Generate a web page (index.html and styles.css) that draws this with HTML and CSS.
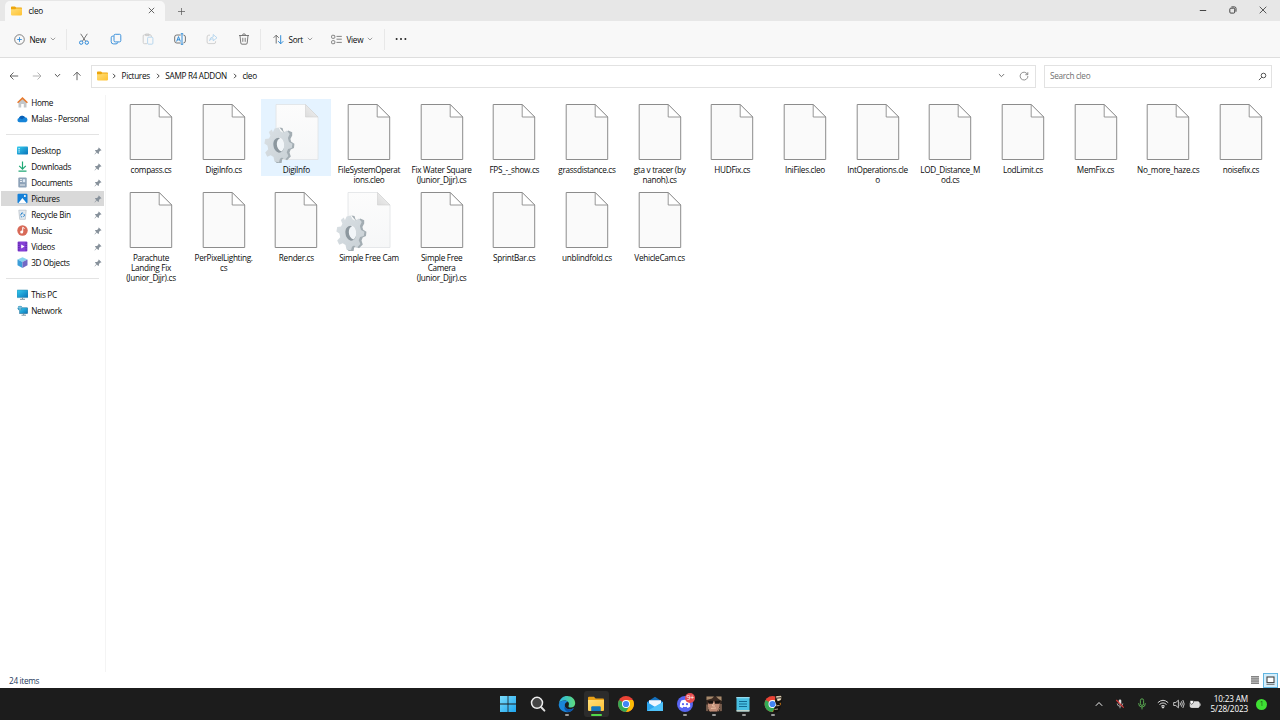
FILE: index.html
```html
<!DOCTYPE html>
<html lang="en">
<head>
  <meta charset="UTF-8">
  <meta name="viewport" content="width=device-width, initial-scale=1.0">
  <title>cleo</title>
  <link rel="stylesheet" href="styles.css">
</head>
<body>

  <!-- shared icons -->
  <svg class="sprite" width="0" height="0">
    <defs>
      <linearGradient id="gFolder" x1="0" y1="0" x2="1" y2="1"><stop offset="0" stop-color="#ffdf7a"/><stop offset="1" stop-color="#ffc233"/></linearGradient>
      <linearGradient id="gPage" x1="0" y1="0" x2="0" y2="1"><stop offset="0" stop-color="#fcfcfc"/><stop offset="1" stop-color="#f6f7f8"/></linearGradient>
      <linearGradient id="gFold" x1="0" y1="1" x2="1" y2="0"><stop offset="0" stop-color="#dcdcdc"/><stop offset="1" stop-color="#f4f4f4"/></linearGradient>
      <linearGradient id="gGear" x1="0" y1="0" x2="1" y2="1"><stop offset="0" stop-color="#dbe1e5"/><stop offset="1" stop-color="#c8d0d5"/></linearGradient>
      <linearGradient id="gScreen" x1="0" y1="0" x2="1" y2="1"><stop offset="0" stop-color="#35cdf0"/><stop offset="1" stop-color="#0a72b8"/></linearGradient>
      <linearGradient id="gEdge" x1="0" y1="0" x2="1" y2="0"><stop offset="0" stop-color="#28b5ea"/><stop offset="1" stop-color="#5fdc7c"/></linearGradient>
      <linearGradient id="gWin" x1="0" y1="0" x2="1" y2="1"><stop offset="0" stop-color="#7bdcfb"/><stop offset="1" stop-color="#1da5ee"/></linearGradient>
    </defs>
    <symbol id="folder" viewBox="0 0 11 10">
      <path d="M0 1.2Q0 .4.8.4H4L5.2 1.5H10.2Q11 1.5 11 2.3V5H0Z" fill="#eda60c"/>
      <path d="M0 3.2H4.2L5.2 2.4H11V8.6Q11 9.4 10.2 9.4H.8Q0 9.4 0 8.6Z" fill="url(#gFolder)"/>
    </symbol>
    <symbol id="file" viewBox="0 0 44 58">
      <path d="M1.2 1.5H30.2L42.7 14V56.5H1.2Z" fill="#fafafa" stroke="#8c8c8c"/>
      <path d="M30.2 1.5V14H42.7Z" fill="#fff" stroke="#8c8c8c" stroke-width=".9"/>
    </symbol>
    <symbol id="ini" viewBox="0 0 56 60">
      <path d="M13 1.5H42.5L55 14V56.5H13Z" fill="url(#gPage)" stroke="#dfe2e4" stroke-width=".8"/>
      <path d="M42.5 1.5V14H55Z" fill="url(#gFold)" stroke="#d0d0d0" stroke-width=".6"/>
      <g fill-rule="evenodd" transform="translate(1.2 0)">
        <path d="M15.2 24.5 18.3 25 19.3 28.6 21.4 29.6 24 27.6 28 29.2V32.4L26.2 36 27 38.8 30.2 40.8 29.8 45 26.5 46.6 25.3 49.4 26.6 53.4 22.8 57.3 19.8 55.5 18 56.3 17.4 60 12.5 60 10.8 58.2 13.5 50 24.5 40 19 29Z" fill="#a3adb3"/>
        <path d="M8.7 29.3 10.4 25.5 14.4 24.5 16.3 28.3 19.1 29.7 22.7 27.6 25.5 31 23.7 35 24.8 39 28.2 40.7 27.6 45 23.9 46.1 22.5 49.2 24.2 53 20.8 56.8 17.8 54.6 15.8 55.7 14.8 59.2 10.3 58.4 9.3 54 6.5 52.3 3 53.8 1 49.6 4 46.3 3.2 42.5.2 40.6 1 36 4.8 35.6 6.2 32.7 4.6 29 7.6 26.4ZM14.5 34.8C11 34.8 8.8 37.8 9.1 42S12.1 49.8 15.6 49.6 20.2 45.8 19.8 41.6 17.7 34.8 14.5 34.8Z" fill="url(#gGear)"/>
        <path d="M15.4 35.4C13.5 36.5 12.6 38.6 12.8 41.4S14.5 47.6 17.2 48.6C19.2 47.4 20.2 44.8 19.8 41.6S17.6 35.6 15.4 35.4Z" fill="#f1f5f8"/>
        <path d="M14.5 34.8C11 34.8 8.8 37.8 9.1 42S12.1 49.8 15.6 49.6L17.4 48.7C14.5 47.6 12.8 44.6 12.6 41.2 12.6 38.3 13.6 36.3 15.8 35.2Z" fill="#8c979e"/>
      </g>
    </symbol>
    <symbol id="pin" viewBox="0 0 8 8">
      <path d="M4.8.5 7.5 3.2 6.8 3.7 6.3 3.6 5 5 4.9 6.6 4.2 7 2.8 5.6.8 7.4.5 7.2 2.3 5.1 1 3.8 1.4 3.1 3 3 4.4 1.7 4.3 1Z" fill="#87919b"/>
    </symbol>
    <symbol id="down" viewBox="0 0 6 4"><path d="M.8.8 3 3 5.2.8" fill="none" stroke="currentColor" stroke-width=".8"/></symbol>
    <symbol id="right" viewBox="0 0 4 6"><path d="M1 .8 3.2 3 1 5.2" fill="none" stroke="currentColor" stroke-width=".9"/></symbol>
  </svg>

  <div class="window">
    <div class="titlebar">
      <div class="tab">
        <svg class="folder" width="11" height="10"><use href="#folder"/></svg>
        <span>cleo</span>
        <svg class="tab-close" width="7" height="7" viewBox="0 0 7 7"><path d="M.8.8 6.2 6.2M6.2.8.8 6.2" stroke="#444" stroke-width=".8"/></svg>
      </div>
      <svg class="tab-add" width="7" height="7" viewBox="0 0 7 7"><path d="M3.5 0V7M0 3.5H7" stroke="#555" stroke-width=".7"/></svg>
      <div class="controls">
        <svg width="8" height="8" viewBox="0 0 8 8"><path d="M.8 4.5H7.2" stroke="#333" stroke-width=".9"/></svg>
        <svg width="8" height="8" viewBox="0 0 8 8" fill="none" stroke="#333" stroke-width=".9"><rect x=".8" y="2.2" width="4.9" height="4.9" rx="1"/><path d="M2.4.9H5.4Q7 .9 7 2.5V5.7"/></svg>
        <svg width="8" height="8" viewBox="0 0 8 8"><path d="M.7.7 7.3 7.3M7.3.7.7 7.3" stroke="#333" stroke-width=".8"/></svg>
      </div>
    </div>

    <div class="toolbar">
      <div class="btn new">
        <svg width="11" height="11" viewBox="0 0 11 11"><circle cx="5.5" cy="5.5" r="4.8" fill="none" stroke="#666" stroke-width=".8"/><path d="M5.5 3.2V7.8M3.2 5.5H7.8" stroke="#2b88d8" stroke-width=".9"/></svg>
        <span>New</span><svg class="chev" width="6" height="4"><use href="#down"/></svg>
      </div>
      <div class="sep"></div>
      <div class="icon"><svg width="12" height="12" viewBox="0 0 12 12" fill="none"><path d="M2.7.8 7.7 8.4M9.3.8 4.3 8.4" stroke="#666" stroke-width=".9"/><circle cx="3.2" cy="9.6" r="1.7" stroke="#2b88d8"/><circle cx="8.8" cy="9.6" r="1.7" stroke="#2b88d8"/></svg></div>
      <div class="icon"><svg width="12" height="12" viewBox="0 0 12 12" fill="none"><path d="M3.6 3.1H2.8Q1.2 3.1 1.2 4.7V8.7Q1.2 10.9 3.4 10.9H6Q7.6 10.9 7.8 9.3" stroke="#2b88d8" stroke-width=".9"/><rect x="4" y="1.3" width="6.8" height="7.6" rx="1.3" stroke="#2b88d8" stroke-width=".9"/></svg></div>
      <div class="icon"><svg width="12" height="12" viewBox="0 0 12 12" fill="none"><path d="M5 10.7H2.5Q1.2 10.7 1.2 9.5V2.9Q1.2 1.8 2.5 1.8H8.1Q9.3 1.8 9.3 3V4M3.6 1H7V2.6H3.6Z" stroke="#c4c4c4" stroke-width=".8"/><rect x="5.6" y="4.2" width="5.3" height="7" rx="1" stroke="#a9cfec" stroke-width=".8"/></svg></div>
      <div class="icon"><svg width="12" height="12" viewBox="0 0 12 12" fill="none"><path d="M6.7 2H2.8Q.7 2 .7 4V8Q.7 10 2.8 10H6.7M9.4 2Q11.4 2.2 11.4 4V8Q11.4 9.8 9.4 10" stroke="#666" stroke-width=".9"/><path d="M8 1V11M6.8.7H9.2M6.8 11.3H9.2M2.6 8.5 4.5 3.6 6.4 8.5M3.2 6.8H5.8" stroke="#1f82d4" stroke-width=".9"/></svg></div>
      <div class="icon"><svg width="12" height="12" viewBox="0 0 12 12" fill="none"><path d="M4 2.2H2.7Q1.1 2.2 1.1 4V9Q1.1 10.6 2.7 10.6H8Q9.6 10.6 9.6 9V8.2" stroke="#c7c7c7" stroke-width=".8"/><path d="M3.5 7.6Q3.9 4 7.2 4V1.5L11 4.8 7.2 7.8V5.7Q5 5.6 3.5 7.6Z" stroke="#a9cfec" stroke-width=".8"/></svg></div>
      <div class="icon"><svg width="12" height="12" viewBox="0 0 12 12" fill="none" stroke="#5c5c5c" stroke-width=".8"><path d="M1 2.5H11M4.5 2.3Q4.5.8 6 .8T7.5 2.3M2 2.6 2.8 10Q2.9 11.2 4 11.2H8Q9.1 11.2 9.2 10L10 2.6M4.8 4.8V8.8M7.2 4.8V8.8"/></svg></div>
      <div class="sep"></div>
      <div class="btn sort">
        <svg width="11" height="11" viewBox="0 0 11 11" fill="none"><path d="M3.2 1.2V9.5M.6 3.8 3.2 1.2 5.8 3.8" stroke="#666" stroke-width=".9"/><path d="M7.7 1.2V9.7M5.2 7.2 7.7 9.8 10.3 7.2" stroke="#1f82d4" stroke-width=".9"/></svg>
        <span>Sort</span><svg class="chev" width="6" height="4"><use href="#down"/></svg>
      </div>
      <div class="btn view">
        <svg width="11" height="11" viewBox="0 0 11 11" fill="none" stroke="#666" stroke-width=".8"><rect x=".6" y="1.3" width="3.2" height="3" rx=".8"/><rect x=".6" y="6.7" width="3.2" height="3" rx=".8"/><path d="M5.5 2.4H10.8M5.5 5.2H10.8M5.5 8.4H10.8"/></svg>
        <span>View</span><svg class="chev" width="6" height="4"><use href="#down"/></svg>
      </div>
      <div class="sep"></div>
      <div class="icon"><svg width="12" height="4" viewBox="0 0 12 4" fill="#222"><circle cx="1.6" cy="2" r="1"/><circle cx="6" cy="2" r="1"/><circle cx="10.4" cy="2" r="1"/></svg></div>
    </div>

    <div class="navbar">
      <div class="nav">
        <svg width="10" height="10" viewBox="0 0 10 10" fill="none" stroke="#555" stroke-width=".9"><path d="M9.2 5H1M4.5 1.5 1 5 4.5 8.5"/></svg>
        <svg width="10" height="10" viewBox="0 0 10 10" fill="none" stroke="#aaa" stroke-width=".9"><path d="M.8 5H9M5.5 1.5 9 5 5.5 8.5"/></svg>
        <svg class="recent" width="7" height="5"><use href="#down"/></svg>
        <svg width="10" height="10" viewBox="0 0 10 10" fill="none" stroke="#555" stroke-width=".9"><path d="M5 9.2V1.2M1.5 4.7 5 1.2 8.5 4.7"/></svg>
      </div>
      <div class="address">
        <svg class="folder" width="11" height="10"><use href="#folder"/></svg>
        <svg class="crumb-sep" width="4" height="6"><use href="#right"/></svg>
        <span>Pictures</span>
        <svg class="crumb-sep" width="4" height="6"><use href="#right"/></svg>
        <span>SAMP R4 ADDON</span>
        <svg class="crumb-sep" width="4" height="6"><use href="#right"/></svg>
        <span>cleo</span>
        <svg class="history" width="7" height="5"><use href="#down"/></svg>
        <svg width="10" height="10" viewBox="0 0 10 10" fill="none" stroke="#777" stroke-width=".8"><path d="M8.6 3.6A3.9 3.9 0 1 0 8.9 5M8.8 1.2V3.7H6.3"/></svg>
      </div>
      <div class="search">
        <span>Search cleo</span>
        <svg width="9" height="9" viewBox="0 0 9 9" fill="none" stroke="#555"><circle cx="5.5" cy="3.5" r="2.3"/><path d="M3.8 5.2.9 8.1"/></svg>
      </div>
    </div>

    <div class="main">
      <div class="sidebar">
        <div class="row">
          <svg width="11" height="11" viewBox="0 0 11 11"><path d="M1.5 5 5.5 1.5 9.5 5V10.5H6.8V7H4.2V10.5H1.5Z" fill="#c3c7ca"/><path d="M.6 5.7 5.5 1.1 10.4 5.7" fill="none" stroke="#e8792c" stroke-width="1.5"/></svg>
          <span>Home</span>
        </div>
        <div class="row">
          <svg width="11" height="11" viewBox="0 0 11 11"><path d="M2.4 9.2A2.2 2.2 0 0 1 2 4.9 3.3 3.3 0 0 1 8 4.3 2.5 2.5 0 0 1 8.7 9.2Z" fill="#1684d8"/><path d="M2 4.9A3.3 3.3 0 0 1 8 4.3L5 6.2Z" fill="#0a5eb5"/></svg>
          <span>Malas - Personal</span>
        </div>
        <div class="divider"></div>
        <div class="row">
          <svg width="11" height="11" viewBox="0 0 11 11"><rect y="1.5" width="11" height="8" rx=".8" fill="url(#gScreen)"/><path d="M1.5 3.5H2.7M1.5 5.2H2.7M1.5 7H2.7" stroke="#dff8ff"/></svg>
          <span>Desktop</span><svg class="pin" width="8" height="8"><use href="#pin"/></svg>
        </div>
        <div class="row">
          <svg width="11" height="11" viewBox="0 0 11 11" fill="none" stroke="#20a876" stroke-width="1.2"><path d="M5.5.5V8M2.2 4.9 5.5 8.2 8.8 4.9M1.5 10.2H9.5"/></svg>
          <span>Downloads</span><svg class="pin" width="8" height="8"><use href="#pin"/></svg>
        </div>
        <div class="row">
          <svg width="11" height="11" viewBox="0 0 11 11"><rect x="1.3" y=".5" width="8.4" height="10" rx="1" fill="#8da2b8"/><path d="M3 2.6H5M3 4.5H5M3 8H8" stroke="#fff" stroke-width=".8"/><rect x="5.8" y="2.2" width="2.4" height="3" fill="#dce8f4"/></svg>
          <span>Documents</span><svg class="pin" width="8" height="8"><use href="#pin"/></svg>
        </div>
        <div class="row selected">
          <svg width="11" height="11" viewBox="0 0 11 11"><rect x=".5" y=".7" width="10" height="9.6" rx="1" fill="#1480d8"/><path d="M1.3 10.3 5.4 5 9.7 10.3Z" fill="#fff"/><circle cx="7.9" cy="3" r="1" fill="#fff"/></svg>
          <span>Pictures</span><svg class="pin" width="8" height="8"><use href="#pin"/></svg>
        </div>
        <div class="row">
          <svg width="11" height="11" viewBox="0 0 11 11"><path d="M1.8 1.2H9.2L8.3 10.3H2.7Z" fill="#e3e9ee" stroke="#a9b4bd" stroke-width=".6"/><path d="M3.5 6.4 4.8 3.9 6.2 4.2M7 5 7.5 6.8 6.3 7.6M5.2 7.8H3.8" fill="none" stroke="#2a83cc"/></svg>
          <span>Recycle Bin</span><svg class="pin" width="8" height="8"><use href="#pin"/></svg>
        </div>
        <div class="row">
          <svg width="11" height="11" viewBox="0 0 11 11"><circle cx="5.5" cy="5.5" r="5.2" fill="#d86a58"/><circle cx="4.7" cy="7" r="1.5" fill="#fff"/><path d="M5.7 7V2.3L7.6 3.5" fill="none" stroke="#fff"/></svg>
          <span>Music</span><svg class="pin" width="8" height="8"><use href="#pin"/></svg>
        </div>
        <div class="row">
          <svg width="11" height="11" viewBox="0 0 11 11"><rect x=".6" y=".6" width="9.8" height="9.8" rx="1" fill="#8540d6"/><path d="M1.9 1.5V9.8M9.1 1.5V9.8" stroke="#4b1b94" stroke-dasharray="1.2 1.1"/><path d="M4.2 3.5 7.6 5.5 4.2 7.5Z" fill="#fff"/></svg>
          <span>Videos</span><svg class="pin" width="8" height="8"><use href="#pin"/></svg>
        </div>
        <div class="row">
          <svg width="11" height="11" viewBox="0 0 11 11"><path d="M5.5.2 10.5 2.5 5.5 5 .5 2.5Z" fill="#86d3ee"/><path d="M.5 2.5 5.5 5V10.9L.5 8.3Z" fill="#3c9dd8"/><path d="M10.5 2.5 5.5 5V10.9L10.5 8.3Z" fill="#7268c4"/></svg>
          <span>3D Objects</span><svg class="pin" width="8" height="8"><use href="#pin"/></svg>
        </div>
        <div class="divider"></div>
        <div class="row">
          <svg width="11" height="11" viewBox="0 0 11 11"><rect y="1" width="11" height="7.6" rx=".6" fill="url(#gScreen)" stroke="#2784a8" stroke-width=".5"/><path d="M3 10.3H8M5.5 8.5V10" stroke="#7c93a1"/></svg>
          <span>This PC</span>
        </div>
        <div class="row">
          <svg width="11" height="11" viewBox="0 0 11 11"><rect x="2.6" y="2.8" width="8.1" height="5.8" fill="url(#gScreen)" stroke="#1d6a94" stroke-width=".5"/><circle cx="3" cy="3.2" r="2.4" fill="#3f9cc4"/><path d="M1.2 2.4Q3 3.6 4.8 2.4M3 1V5.4" fill="none" stroke="#bfe6f5" stroke-width=".5"/><path d="M4.5 10.2H9M6.7 8.6V10" stroke="#66899a" stroke-width=".9"/></svg>
          <span>Network</span>
        </div>
      </div>

      <div class="files">
        <div class="file"><svg width="44" height="58"><use href="#file"/></svg><span>compass.cs</span></div>
        <div class="file"><svg width="44" height="58"><use href="#file"/></svg><span>DigiInfo.cs</span></div>
        <div class="file hover"><svg class="ini" width="56" height="60"><use href="#ini"/></svg><span>DigiInfo</span></div>
        <div class="file"><svg width="44" height="58"><use href="#file"/></svg><span>FileSystemOperat<br>ions.cleo</span></div>
        <div class="file"><svg width="44" height="58"><use href="#file"/></svg><span>Fix Water Square<br>(Junior_Djjr).cs</span></div>
        <div class="file"><svg width="44" height="58"><use href="#file"/></svg><span>FPS_-_show.cs</span></div>
        <div class="file"><svg width="44" height="58"><use href="#file"/></svg><span>grassdistance.cs</span></div>
        <div class="file"><svg width="44" height="58"><use href="#file"/></svg><span>gta v tracer (by<br>nanoh).cs</span></div>
        <div class="file"><svg width="44" height="58"><use href="#file"/></svg><span>HUDFix.cs</span></div>
        <div class="file"><svg width="44" height="58"><use href="#file"/></svg><span>IniFiles.cleo</span></div>
        <div class="file"><svg width="44" height="58"><use href="#file"/></svg><span>IntOperations.cle<br>o</span></div>
        <div class="file"><svg width="44" height="58"><use href="#file"/></svg><span>LOD_Distance_M<br>od.cs</span></div>
        <div class="file"><svg width="44" height="58"><use href="#file"/></svg><span>LodLimit.cs</span></div>
        <div class="file"><svg width="44" height="58"><use href="#file"/></svg><span>MemFix.cs</span></div>
        <div class="file"><svg width="44" height="58"><use href="#file"/></svg><span>No_more_haze.cs</span></div>
        <div class="file"><svg width="44" height="58"><use href="#file"/></svg><span>noisefix.cs</span></div>
        <div class="file"><svg width="44" height="58"><use href="#file"/></svg><span>Parachute<br>Landing Fix<br>(Junior_Djjr).cs</span></div>
        <div class="file"><svg width="44" height="58"><use href="#file"/></svg><span>PerPixelLighting.<br>cs</span></div>
        <div class="file"><svg width="44" height="58"><use href="#file"/></svg><span>Render.cs</span></div>
        <div class="file"><svg class="ini" width="56" height="60"><use href="#ini"/></svg><span>Simple Free Cam</span></div>
        <div class="file"><svg width="44" height="58"><use href="#file"/></svg><span>Simple Free<br>Camera<br>(Junior_Djjr).cs</span></div>
        <div class="file"><svg width="44" height="58"><use href="#file"/></svg><span>SprintBar.cs</span></div>
        <div class="file"><svg width="44" height="58"><use href="#file"/></svg><span>unblindfold.cs</span></div>
        <div class="file"><svg width="44" height="58"><use href="#file"/></svg><span>VehicleCam.cs</span></div>
      </div>
    </div>

    <div class="statusbar">
      <span>24 items</span>
      <svg class="details" width="8" height="8" viewBox="0 0 8 8"><rect width="8" height="8" fill="#b4b4b4"/><path d="M0 .5H8M0 2.8H8M0 5.1H8M0 7.5H8" stroke="#777" stroke-width=".8"/></svg>
      <div class="large"><svg width="9" height="9" viewBox="0 0 9 9"><rect x="1" y="1" width="7" height="5.6" fill="#fff" stroke="#444" stroke-width="1.1"/><path d="M.5 8.4H8.5" stroke="#777"/></svg></div>
    </div>
  </div>

  <div class="taskbar">
    <div class="apps">
      <div class="app"><svg width="18" height="18" viewBox="0 0 18 18"><path d="M1 1H8.6V8.6H1ZM9.4 1H17V8.6H9.4ZM1 9.4H8.6V17H1ZM9.4 9.4H17V17H9.4Z" fill="url(#gWin)"/></svg></div>
      <div class="app"><svg width="18" height="18" viewBox="0 0 18 18" fill="none"><circle cx="8" cy="7.8" r="5.5" fill="#454545" stroke="#eee" stroke-width="1.5"/><path d="M12 12 15.4 15.6" stroke="#ddd" stroke-width="2" stroke-linecap="round"/></svg></div>
      <div class="app running"><svg width="18" height="18" viewBox="0 0 18 18"><path d="M.9 8.4C1.8 3.5 5 .9 9.2.9 14 .9 17.2 4.5 17.2 8.2 17.2 11 15.2 12.5 12.8 12.5 10.8 12.5 10 11.5 10.7 10.4 11.8 8.2 9.8 5.6 6.5 5.6 4.1 5.6 2 6.8.9 8.4Z" fill="url(#gEdge)"/><path d="M.8 9C1.4 7 3.5 5.6 6.5 5.6 8.1 5.6 9.3 6.2 10 7.1 7.8 7 6.4 9 6.9 11.2 7.5 14 11 15.2 15.9 13.3 14.4 15.8 12 17.2 9.2 17.2 4.1 17.2.2 13.3.8 9Z" fill="#1a86d8"/><path d="M6.9 11.2C7.5 14 11 15.2 15.9 13.3 14.8 15.2 12.8 16.6 10.5 17 7 16.5 5.6 13.5 6.9 11.2Z" fill="#0c55ab"/></svg></div>
      <div class="app active"><svg width="18" height="18" viewBox="0 0 18 18"><path d="M1 2.8Q1 1.8 2 1.8H7L8.6 3.5H16Q17 3.5 17 4.5V8H1Z" fill="#e9a117"/><path d="M1 5H17V15Q17 16 16 16H2Q1 16 1 15Z" fill="url(#gFolder)"/><path d="M4.2 16V12.5Q4.2 11.3 5.4 11.3H12.6Q13.8 11.3 13.8 12.5V16Z" fill="#1477bd"/></svg></div>
      <div class="app"><svg width="18" height="18" viewBox="0 0 18 18"><circle cx="9" cy="9" r="8" fill="#ea4335"/><path d="M9 9 2.1 5A8 8 0 0 0 9 17L12.7 11Z" fill="#34a853"/><path d="M9 5H15.9A8 8 0 0 1 9 17L12.6 11Z" fill="#fbbc05"/><circle cx="9" cy="9" r="4" fill="#fff"/><circle cx="9" cy="9" r="3.1" fill="#4285f4"/></svg></div>
      <div class="app"><svg width="18" height="18" viewBox="0 0 18 18"><path d="M1 7 9 1.8 17 7V16H1Z" fill="#1470bd"/><path d="M3 5.2H15V9.5L9 13 3 9.5Z" fill="#eef7ff"/><path d="M1 7 9.2 12 17 7V16H1Z" fill="#2ea6ee"/><path d="M1 16 17 7V16Z" fill="#4fc3fa"/></svg></div>
      <div class="app running">
        <svg width="18" height="18" viewBox="0 0 18 18"><circle cx="9" cy="9" r="8" fill="#5865f2"/><path d="M5.3 5.5Q9 4.2 12.7 5.5 14.5 8.5 14.3 11.4 13 12.6 11.4 12.9L10.8 11.8Q9 12.2 7.2 11.8L6.6 12.9Q5 12.6 3.7 11.4 3.5 8.5 5.3 5.5Z" fill="#fff"/><circle cx="7" cy="9.2" r="1.1" fill="#5865f2"/><circle cx="11" cy="9.2" r="1.1" fill="#5865f2"/></svg>
        <span class="badge">9+</span>
      </div>
      <div class="app running"><svg width="18" height="18" viewBox="0 0 18 18"><rect x="1.5" y="1.5" width="15" height="15" fill="#3b2a22"/><path d="M1.5 1.5H9L7 3.5 1.5 5ZM11 1.5H16.5V6L13 3.5Z" fill="#a78a6c"/><path d="M3 6.5 15 6 14.5 12 12 16.5H5L3 12Z" fill="#c08c76"/><path d="M2.5 5.8H8.4L8 8.8H3.6ZM9.4 6 15.6 5.5 14.5 8.8H10Z" fill="#17110f"/><path d="M8.5 8 7.5 11H10M6 13.4 11 13" stroke="#efc4a7" stroke-width=".9" fill="none"/><path d="M2 9.5V16M3.5 13 5 16.3M16 9V16M14.5 13 13 16.3" stroke="#b08a72" fill="none"/></svg></div>
      <div class="app running"><svg width="18" height="18" viewBox="0 0 18 18"><rect x="2.5" y="2" width="13" height="14.5" rx="1" fill="#48bfe2"/><path d="M2.5 2.6H15.5" stroke="#e0f8ff" stroke-width="1.4" stroke-dasharray="1 1"/><path d="M5 6.5H13M5 9H13M5 11.5H13" stroke="#126a91"/><path d="M2.5 15.2H15.5V16.5H2.5Z" fill="#e3d9c4"/></svg></div>
      <div class="app running">
        <svg width="20" height="18" viewBox="0 0 20 18"><circle cx="9.5" cy="9" r="8" fill="#ea4335"/><path d="M9.5 9 2.6 5A8 8 0 0 0 9.5 17L13.2 11Z" fill="#34a853"/><path d="M9.5 5H16.4A8 8 0 0 1 9.5 17L13.1 11Z" fill="#fbbc05"/><circle cx="9.5" cy="9" r="4" fill="#fff"/><circle cx="9.5" cy="9" r="3.1" fill="#4285f4"/><path d="M12.5 0 17.5-.2 19.5 2 19 6.5 16.5 8.5 18 11 16.5 15 14 17.5 10 17.3 11.5 12.5 13.5 10 12 6.5Z" fill="#15120f"/><path d="M13.4 1.6 18 1.2 17.6 4.8 14.8 5.8ZM13.5 10.8 16.5 10.5M11.5 14.5 15 14" fill="#f3e1c3" stroke="#f3e1c3" stroke-width=".7"/><path d="M13.6 3.2 18 2.7" stroke="#222"/></svg>
      </div>
    </div>
    <div class="tray">
      <svg class="up" width="8" height="6" viewBox="0 0 8 6"><path d="M.8 4.8 4 1.5 7.2 4.8" fill="none" stroke="#eee"/></svg>
      <svg class="mute" width="10" height="12" viewBox="0 0 10 12" fill="none"><rect x="3.7" y="1.5" width="2.6" height="5" rx="1.3" fill="#ddd"/><path d="M2.2 5.5Q2.2 8.2 5 8.2T7.8 5.5M5 8.2V10.3" stroke="#ccc" stroke-width=".8"/><path d="M1.3 2 8.7 9.6" stroke="#d83b3b" stroke-width="1.1"/></svg>
      <svg class="mic" width="10" height="12" viewBox="0 0 10 12" fill="none" stroke="#5fb656" stroke-width=".9"><rect x="3.4" y=".8" width="3.2" height="6.6" rx="1.6"/><path d="M1.6 5.2Q1.6 9 5 9T8.4 5.2M5 9V11.4"/></svg>
      <svg class="wifi" width="12" height="10" viewBox="0 0 12 10" fill="none" stroke="#eee" stroke-width=".9"><path d="M.8 3.7Q6-1.1 11.2 3.7M2.5 5.5Q6 2.4 9.5 5.5M4.1 7.2Q6 5.6 7.9 7.2"/><circle cx="6" cy="8.4" r=".7" fill="#eee"/></svg>
      <svg class="sound" width="12" height="10" viewBox="0 0 12 10" fill="none" stroke="#eee" stroke-width=".8"><path d="M.7 3.5H2.8L5.4 1.2V8.8L2.8 6.5H.7ZM7 3.5Q8 5 7 6.5M8.4 2.3Q10.2 5 8.4 7.7M9.8 1Q12.6 5 9.8 9"/></svg>
      <svg class="battery" width="12" height="10" viewBox="0 0 12 10"><rect x="1.2" y="2.8" width="9" height="5.6" rx="1.2" fill="#ddd" stroke="#eee" stroke-width=".8"/><path d="M11 4.5V6.8" stroke="#eee"/><path d="M1 1.5H4.4V3.8L2.7 5.3 1 3.8Z" fill="#fff" stroke="#1c1c1c" stroke-width=".6"/></svg>
      <div class="clock">10:23 AM<br>5/28/2023</div>
      <div class="count">1</div>
    </div>
  </div>

</body>
</html>
```
FILE: styles.css
```css
* { box-sizing: border-box; }
html, body { margin: 0; height: 100%; overflow: hidden; }
body {
  display: flex;
  flex-direction: column;
  font-family: "Open Sans", "Noto Sans", sans-serif;
  font-size: 8.2px;
  font-weight: 500;
  letter-spacing: -0.3px;
  line-height: 10px;
  color: #0a0a0a;
  background: #fff;
}
svg { display: block; flex: none; }
span { white-space: nowrap; }
.sprite { position: absolute; }
.window { flex: 1; min-height: 0; display: flex; flex-direction: column; }

/* title bar */
.titlebar { height: 21px; flex: none; display: flex; align-items: center; background: #e7e7e7; }
.tab {
  width: 160px;
  height: 20px;
  margin: 1px 0 0 5px;
  padding: 0 10px 1px 6px;
  display: flex;
  align-items: center;
  background: #f8f8f8;
  border-radius: 5px 5px 0 0;
}
.tab span { margin: 1px 0 0 6.5px; }
.tab-close { margin-left: auto; }
.tab-add { margin: 1px 0 0 13px; }
.controls { margin-left: auto; padding: 0 13px 2px 0; display: flex; gap: 22px; }

/* command bar */
.toolbar {
  height: 37px;
  flex: none;
  display: flex;
  align-items: center;
  background: #f8f8f8;
  border-bottom: 1px solid #dedede;
}
.btn { display: flex; align-items: center; }
.btn span { margin: 1px 0 0 5px; }
.chev { margin-left: auto; color: #888; }
.new { width: 66px; padding: 0 10px 0 13.5px; }
.sort { width: 58.5px; padding: 0 7px 0 11.5px; }
.view { width: 64px; padding: 0 11px 0 11px; }
.sep { width: 1px; height: 21px; background: #e8e8e8; }
.icon { width: 32px; display: flex; justify-content: center; }
.sep + .icon { margin-left: 1px; }
.view + .sep + .icon { margin-left: 0; }

/* address row */
.navbar { height: 37px; flex: none; display: flex; align-items: center; padding-right: 8px; }
.nav { width: 91px; padding: 0 0 2px 9px; display: flex; align-items: center; gap: 13.3px; }
.recent { margin: 0 -2px; color: #444; }
.address, .search { height: 23px; border: 1px solid #e2e2e2; display: flex; align-items: center; }
.address { width: 945px; padding: 0 6px 2px 5px; }
.crumb-sep { margin: 0 5.5px 0 4px; color: #333; }
.address span + .crumb-sep { margin-left: 6px; }
.history { margin: 0 14px 0 auto; color: #666; }
.search { flex: 1; margin-left: 8px; padding: 0 4px 1px 5px; justify-content: space-between; color: #707070; }
.search span { margin-bottom: 1px; }

/* navigation pane */
.main { flex: 1; min-height: 0; display: flex; }
.sidebar { width: 106px; border-right: 1px solid #f4f4f4; }
.row { height: 15px; margin: 0 1px 1px; padding: 0 2px 0 16px; display: flex; align-items: center; }
.row span { margin-left: 3.2px; }
.row.selected { background: #d9d9d9; }
.pin { margin-left: auto; }
.divider { height: 16px; padding: 7px 6px 0; }
.divider::before { content: ""; display: block; height: 1px; background: #e3e3e3; }

/* icon grid */
.files {
  width: 1164px;
  margin: 4px 0 0 10px;
  display: grid;
  grid-template-columns: repeat(16, 72.67px);
  grid-auto-rows: 88px;
  align-content: start;
}
.file {
  width: 70px;
  height: 77px;
  padding-top: 4px;
  display: flex;
  flex-direction: column;
  align-items: center;
  text-align: center;
}
.file span { margin-top: 4px; }
.file .ini { margin: 0 11.5px -2px 0; }
.file.hover { background: #e5f3ff; }

/* status bar */
.statusbar { height: 16px; flex: none; display: flex; align-items: center; padding: 0 2px 0 9px; color: #1e395b; }
.statusbar span { margin-top: 2px; }
.details { margin: 0 4px 0 auto; }
.large { width: 15px; height: 15px; display: flex; align-items: center; justify-content: center; background: #d4eefb; border: 1px solid #62b6e2; }

/* taskbar */
.taskbar { height: 32px; flex: none; display: flex; background: #1c1c1c; color: #fff; }
.apps { margin-left: 493.5px; display: flex; }
.app { position: relative; width: 29.4px; display: flex; align-items: center; justify-content: center; }
.app.running::after, .app.active::after {
  content: "";
  position: absolute;
  bottom: 4px;
  left: 13px;
  width: 4px;
  height: 2px;
  border-radius: 1px;
  background: #9a9a9a;
}
.app.active::after { left: 9px; width: 11px; background: #52d84a; }
.app.active::before {
  content: "";
  position: absolute;
  inset: 3px 2px 3px 2px;
  border-radius: 3px;
  background: #2c2c2c;
}
.app.active svg { position: relative; }
.badge {
  position: absolute;
  top: 5px;
  right: 4px;
  width: 10px;
  height: 10px;
  border-radius: 5px;
  background: #e84d4f;
  font-size: 7px;
  line-height: 9px;
  text-align: center;
}
.tray { margin-left: auto; padding-right: 13px; display: flex; align-items: center; }
.mute { margin-left: 12px; }
.mic { margin-left: 11.5px; }
.wifi { margin-left: 10.5px; }
.sound { margin-left: 4px; }
.battery { margin-left: 4px; }
.clock { width: 47px; text-align: right; font-weight: 400; letter-spacing: -0.15px; }
.count { width: 11px; height: 11px; margin-left: 8px; border-radius: 6px; background: #3fe033; color: #164d13; font-size: 7px; text-align: center; }
```
